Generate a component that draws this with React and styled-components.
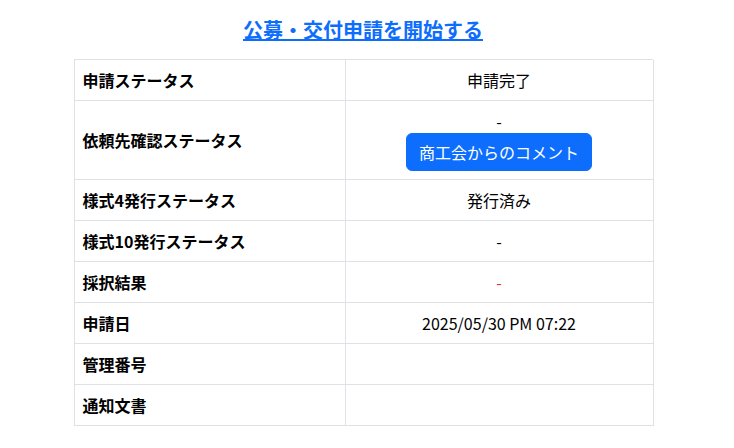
import React from 'react';
import styled, { createGlobalStyle } from 'styled-components';

const GlobalStyle = createGlobalStyle`
  html, body {
    margin: 0;
    padding: 0;
    background: #fff;
  }
  body {
    font-family: "Noto Sans CJK JP", "Noto Sans", sans-serif;
    font-size: 16px;
    line-height: 1.5;
    color: #000;
  }
`;

const Page = styled.div`
  width: 726px;
  padding-top: 15px;
  display: flex;
  flex-direction: column;
  align-items: center;
`;

const TitleLink = styled.a`
  font-size: 20px;
  line-height: 30px;
  font-weight: bold;
  color: #0d6efd;
  text-decoration: underline;
  margin-bottom: 14px;
  cursor: pointer;
`;

const Table = styled.div`
  width: 579px;
  display: grid;
  grid-template-columns: 271px 308px;
  border-top: 1px solid #dee2e6;
  border-left: 1px solid #dee2e6;
  box-sizing: border-box;
`;

const Cell = styled.div`
  border-right: 1px solid #dee2e6;
  border-bottom: 1px solid #dee2e6;
  padding: 8px;
  min-height: 24px;
  display: flex;
  flex-direction: column;
  justify-content: center;
  align-items: ${(p) => (p.$label ? 'flex-start' : 'center')};
  font-weight: ${(p) => (p.$label ? 'bold' : 'normal')};
  color: ${(p) => (p.$danger ? '#dc3545' : '#000')};
`;

const Button = styled.button`
  font-family: inherit;
  font-size: 16px;
  line-height: 24px;
  padding: 6px 12px;
  color: #fff;
  background: #0d6efd;
  border: 1px solid #0d6efd;
  border-radius: 6px;
  cursor: pointer;
`;

const rows = [
  { label: '申請ステータス', value: '申請完了' },
  { label: '依頼先確認ステータス', value: '-', button: '商工会からのコメント' },
  { label: '様式4発行ステータス', value: '発行済み' },
  { label: '様式10発行ステータス', value: '-' },
  { label: '採択結果', value: '-', danger: true },
  { label: '申請日', value: '2025/05/30 PM 07:22' },
  { label: '管理番号', value: '' },
  { label: '通知文書', value: '' },
];

const App = () => {
  return (
    <>
      <GlobalStyle />
      <Page>
        <TitleLink>公募・交付申請を開始する</TitleLink>
        <Table>
          {rows.map((row) => (
            <React.Fragment key={row.label}>
              <Cell $label>{row.label}</Cell>
              <Cell $danger={row.danger}>
                {row.value && <span>{row.value}</span>}
                {row.button && <Button>{row.button}</Button>}
              </Cell>
            </React.Fragment>
          ))}
        </Table>
      </Page>
    </>
  );
};

export default App;
